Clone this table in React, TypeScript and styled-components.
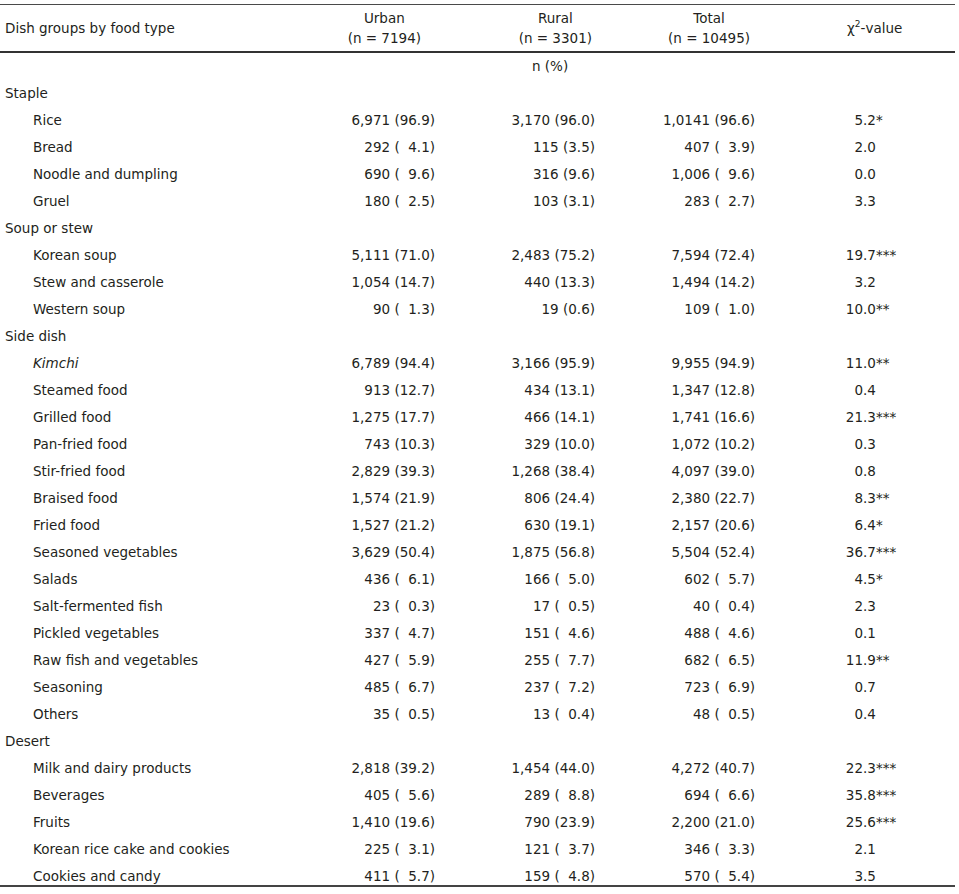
import styled, { createGlobalStyle } from "styled-components";

type Row = {
  label: string;
  urban: string;
  rural: string;
  total: string;
  chi: string;
  italic?: boolean;
};

type Section = { title: string; rows: Row[] };

const F = "\u2007";

const r = (
  label: string,
  urban: string,
  rural: string,
  total: string,
  chi: string,
  italic?: boolean
): Row => ({ label, urban, rural, total, chi, italic });

const SECTIONS: Section[] = [
  {
    title: "Staple",
    rows: [
      r("Rice", "6,971 (96.9)", "3,170 (96.0)", "1,0141 (96.6)", "5.2*"),
      r("Bread", `292 (${F}4.1)`, "115 (3.5)", `407 (${F}3.9)`, "2.0"),
      r("Noodle and dumpling", `690 (${F}9.6)`, "316 (9.6)", `1,006 (${F}9.6)`, "0.0"),
      r("Gruel", `180 (${F}2.5)`, "103 (3.1)", `283 (${F}2.7)`, "3.3"),
    ],
  },
  {
    title: "Soup or stew",
    rows: [
      r("Korean soup", "5,111 (71.0)", "2,483 (75.2)", "7,594 (72.4)", "19.7***"),
      r("Stew and casserole", "1,054 (14.7)", "440 (13.3)", "1,494 (14.2)", "3.2"),
      r("Western soup", `90 (${F}1.3)`, "19 (0.6)", `109 (${F}1.0)`, "10.0**"),
    ],
  },
  {
    title: "Side dish",
    rows: [
      r("Kimchi", "6,789 (94.4)", "3,166 (95.9)", "9,955 (94.9)", "11.0**", true),
      r("Steamed food", "913 (12.7)", "434 (13.1)", "1,347 (12.8)", "0.4"),
      r("Grilled food", "1,275 (17.7)", "466 (14.1)", "1,741 (16.6)", "21.3***"),
      r("Pan-fried food", "743 (10.3)", "329 (10.0)", "1,072 (10.2)", "0.3"),
      r("Stir-fried food", "2,829 (39.3)", "1,268 (38.4)", "4,097 (39.0)", "0.8"),
      r("Braised food", "1,574 (21.9)", "806 (24.4)", "2,380 (22.7)", "8.3**"),
      r("Fried food", "1,527 (21.2)", "630 (19.1)", "2,157 (20.6)", "6.4*"),
      r("Seasoned vegetables", "3,629 (50.4)", "1,875 (56.8)", "5,504 (52.4)", "36.7***"),
      r("Salads", `436 (${F}6.1)`, `166 (${F}5.0)`, `602 (${F}5.7)`, "4.5*"),
      r("Salt-fermented fish", `23 (${F}0.3)`, `17 (${F}0.5)`, `40 (${F}0.4)`, "2.3"),
      r("Pickled vegetables", `337 (${F}4.7)`, `151 (${F}4.6)`, `488 (${F}4.6)`, "0.1"),
      r("Raw fish and vegetables", `427 (${F}5.9)`, `255 (${F}7.7)`, `682 (${F}6.5)`, "11.9**"),
      r("Seasoning", `485 (${F}6.7)`, `237 (${F}7.2)`, `723 (${F}6.9)`, "0.7"),
      r("Others", `35 (${F}0.5)`, `13 (${F}0.4)`, `48 (${F}0.5)`, "0.4"),
    ],
  },
  {
    title: "Desert",
    rows: [
      r("Milk and dairy products", "2,818 (39.2)", "1,454 (44.0)", "4,272 (40.7)", "22.3***"),
      r("Beverages", `405 (${F}5.6)`, `289 (${F}8.8)`, `694 (${F}6.6)`, "35.8***"),
      r("Fruits", "1,410 (19.6)", "790 (23.9)", "2,200 (21.0)", "25.6***"),
      r("Korean rice cake and cookies", `225 (${F}3.1)`, `121 (${F}3.7)`, `346 (${F}3.3)`, "2.1"),
      r("Cookies and candy", `411 (${F}5.7)`, `159 (${F}4.8)`, `570 (${F}5.4)`, "3.5"),
    ],
  },
];

const GlobalStyle = createGlobalStyle`
  body {
    margin: 0;
    background: #ffffff;
    font-family: "DejaVu Sans", "Liberation Sans", sans-serif;
    color: #231f20;
  }
`;

const COLS = "300px 135px 160px 160px 1fr";

const Table = styled.div`
  width: 955px;
  padding-top: 4px;
  font-size: 13.5px;
`;

const HeadRow = styled.div`
  display: grid;
  grid-template-columns: ${COLS};
  height: 46px;
  align-items: center;
  border-top: 1px solid #4a4a4a;
  border-bottom: 2px solid #333333;
`;

const HeadLabel = styled.div`
  padding-left: 5px;
`;

const HeadCell = styled.div<{ $pr: number }>`
  justify-self: end;
  padding-right: ${(p) => p.$pr}px;
  text-align: center;
  line-height: 20px;
`;

const ChiHead = styled.div`
  padding-left: 92px;
  sup {
    font-size: 9px;
    vertical-align: 6px;
    line-height: 0;
  }
`;

const UnitNote = styled.div`
  height: 27px;
  line-height: 27px;
  padding-left: 532px;
`;

const Body = styled.div`
  border-bottom: 2px solid #444444;
`;

const DataRow = styled.div<{ $last?: boolean }>`
  display: grid;
  grid-template-columns: ${COLS};
  height: ${(p) => (p.$last ? 22 : 27)}px;
  line-height: 27px;
  align-items: start;
  white-space: pre;
`;

const GroupLabel = styled.div`
  padding-left: 5px;
`;

const ItemLabel = styled.div<{ $italic?: boolean }>`
  padding-left: 33px;
  font-style: ${(p) => (p.$italic ? "italic" : "normal")};
`;

const Num = styled.div`
  text-align: right;
`;

const Chi = styled.div`
  display: grid;
  grid-template-columns: 108px auto;
`;

const ChiInt = styled.span`
  text-align: right;
`;

const ChiRest = styled.span`
  text-align: left;
`;

const ChiValue = ({ value }: { value: string }) => {
  const dot = value.indexOf(".");
  return (
    <Chi>
      <ChiInt>{value.slice(0, dot)}</ChiInt>
      <ChiRest>{value.slice(dot)}</ChiRest>
    </Chi>
  );
};

export default function App() {
  return (
    <>
      <GlobalStyle />
      <Table>
        <HeadRow>
          <HeadLabel>Dish groups by food type</HeadLabel>
          <HeadCell $pr={14}>
            Urban
            <br />
            (n = 7194)
          </HeadCell>
          <HeadCell $pr={3}>
            Rural
            <br />
            (n = 3301)
          </HeadCell>
          <HeadCell $pr={5}>
            Total
            <br />
            (n = 10495)
          </HeadCell>
          <ChiHead>
            χ<sup>2</sup>-value
          </ChiHead>
        </HeadRow>
        <UnitNote>n (%)</UnitNote>
        <Body>
          {SECTIONS.map((s, si) => (
            <div key={s.title}>
              <DataRow>
                <GroupLabel>{s.title}</GroupLabel>
              </DataRow>
              {s.rows.map((row, ri) => (
                <DataRow
                  key={row.label}
                  $last={si === SECTIONS.length - 1 && ri === s.rows.length - 1}
                >
                  <ItemLabel $italic={row.italic}>{row.label}</ItemLabel>
                  <Num>{row.urban}</Num>
                  <Num>{row.rural}</Num>
                  <Num>{row.total}</Num>
                  <ChiValue value={row.chi} />
                </DataRow>
              ))}
            </div>
          ))}
        </Body>
      </Table>
    </>
  );
}
